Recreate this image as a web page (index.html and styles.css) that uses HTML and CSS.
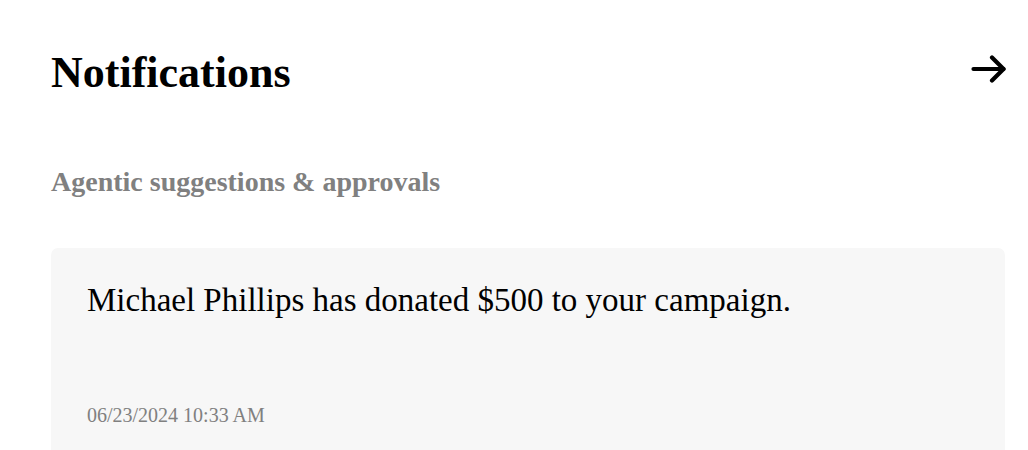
FILE: index.html
```html
<!DOCTYPE html>
<html lang="en">
<head>
<meta charset="utf-8">
<title>Notifications</title>
<link rel="stylesheet" href="styles.css">
</head>
<body>
<main class="panel">
  <header class="panel-header">
    <h1 class="panel-title">Notifications</h1>
    <button class="icon-btn" aria-label="Open notifications">
      <svg width="36" height="30" viewBox="0 0 36 30" fill="none" stroke="currentColor" stroke-width="4.2" stroke-linecap="round" stroke-linejoin="round"><path d="M3.5 15H33.5"/><path d="M22 3.5 33.5 15 22 26.5"/></svg>
    </button>
  </header>
  <h2 class="section-title">Agentic suggestions &amp; approvals</h2>
  <article class="card">
    <p class="card-text">Michael Phillips has donated $500 to your campaign.</p>
    <time class="card-time">06/23/2024 10:33 AM</time>
  </article>
</main>
</body>
</html>
```
FILE: styles.css
```css
html, body {
  margin: 0;
  padding: 0;
  background: #ffffff;
}
body {
  font-family: "Liberation Serif", "DejaVu Serif", serif;
  color: #000;
}
.panel {
  padding: 44px 22px 0 51px;
  display: flex;
  flex-direction: column;
}
.panel-header {
  display: flex;
  align-items: center;
  justify-content: space-between;
  height: 58px;
}
.panel-title {
  margin: 0;
  font-size: 44px;
  line-height: 58px;
  font-weight: 700;
}
.icon-btn {
  border: 0;
  background: none;
  padding: 0;
  color: #000;
  display: flex;
  margin-bottom: 8px;
}
.section-title {
  margin: 64px 0 0;
  font-size: 28px;
  line-height: 32px;
  font-weight: 700;
  color: #808080;
}
.card {
  margin: 50px 1px 0 0;
  background: #f7f7f7;
  border-radius: 7px;
  padding: 32px 36px 40px;
  display: flex;
  flex-direction: column;
  gap: 83px;
  min-height: 220px;
  box-sizing: border-box;
}
.card-text {
  margin: 0;
  font-size: 33px;
  line-height: 40px;
}
.card-time {
  font-family: "Liberation Serif", serif;
  font-size: 20px;
  line-height: 24px;
  color: #808080;
}
```
